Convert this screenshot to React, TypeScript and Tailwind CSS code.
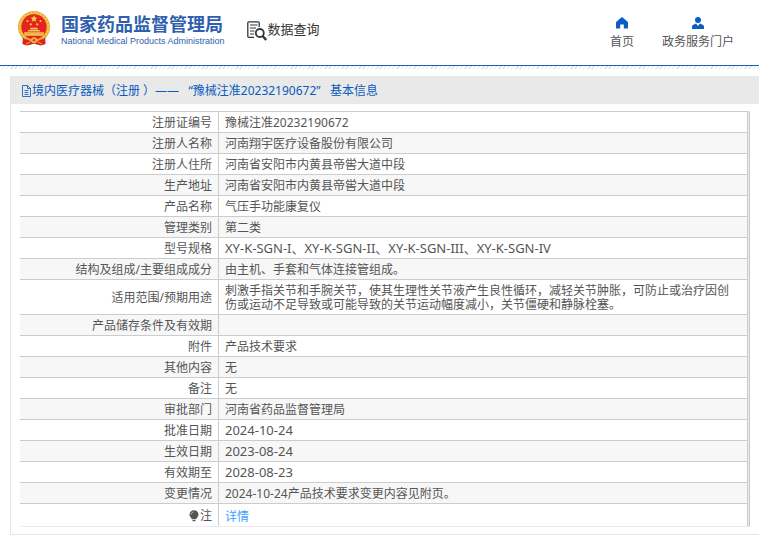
interface DetailRow {
  label: string;
  value: string;
  latin?: boolean;
}

const rows: DetailRow[] = [
  { label: '注册证编号', value: '豫械注准20232190672' },
  { label: '注册人名称', value: '河南翔宇医疗设备股份有限公司' },
  { label: '注册人住所', value: '河南省安阳市内黄县帝喾大道中段' },
  { label: '生产地址', value: '河南省安阳市内黄县帝喾大道中段' },
  { label: '产品名称', value: '气压手功能康复仪' },
  { label: '管理类别', value: '第二类' },
  { label: '型号规格', value: 'XY-K-SGN-I、XY-K-SGN-II、XY-K-SGN-III、XY-K-SGN-IV', latin: true },
  { label: '结构及组成/主要组成成分', value: '由主机、手套和气体连接管组成。' },
  {
    label: '适用范围/预期用途',
    value:
      '刺激手指关节和手腕关节，使其生理性关节液产生良性循环，减轻关节肿胀，可防止或治疗因创伤或运动不足导致或可能导致的关节运动幅度减小，关节僵硬和静脉栓塞。',
  },
  { label: '产品储存条件及有效期', value: '' },
  { label: '附件', value: '产品技术要求' },
  { label: '其他内容', value: '无' },
  { label: '备注', value: '无' },
  { label: '审批部门', value: '河南省药品监督管理局' },
  { label: '批准日期', value: '2024-10-24', latin: true },
  { label: '生效日期', value: '2023-08-24', latin: true },
  { label: '有效期至', value: '2028-08-23', latin: true },
  { label: '变更情况', value: '2024-10-24产品技术要求变更内容见附页。' },
];

function Emblem() {
  return (
    <svg className="h-[35px] w-8 shrink-0" viewBox="0 0 32 35" aria-hidden="true">
      <path d="M5 26h22l.6 7-4.600 1.400-7-1.600-7 1.600L4.400 33z" fill="#d8201c" />
      <circle cx="16" cy="16" r="16" fill="#e9ae35" />
      <circle cx="16" cy="16" r="14.200" fill="none" stroke="#f8d766" strokeWidth="1.200" strokeDasharray="2 1.300" />
      <circle cx="16" cy="15.800" r="12.600" fill="#e5231f" />
      <path d="M16 4.300l1 2.200 2.400.2-1.800 1.600.6 2.400-2.200-1.300-2.200 1.300.6-2.400-1.800-1.600 2.400-.2z" fill="#fbd64c" />
      <g fill="#f7c740">
        <circle cx="9.500" cy="10" r="1.100" />
        <circle cx="22.500" cy="10" r="1.100" />
        <circle cx="12.800" cy="13.400" r="1.100" />
        <circle cx="19.200" cy="13.400" r="1.100" />
      </g>
      <path d="M12 17.500l1.200-.8h5.600l1.200.8v1h-8zM10.500 19h11l1 1.500h-13zM6 21.200h20l-.6 3.600H6.600z" fill="#f6cb55" />
      <path d="M6.500 22.800h19" stroke="#e59a34" strokeWidth=".7" />
      <path d="M4.500 26.500c4 1 7 2 8.500 3.500h6c1.500-1.500 4.500-2.500 8.500-3.500l-1 3-5.500 2.500h-10L5.500 29.500z" fill="#dc2420" />
      <path d="M6 27.500c3.500.2 5.500 1.500 7 3M26 27.500c-3.500.2-5.500 1.500-7 3M8 33l4-2M24 33l-4-2" fill="none" stroke="#f1b53f" strokeWidth="1" />
      <circle cx="16" cy="29.300" r="3" fill="#f2bd42" />
      <circle cx="16" cy="29.300" r="1.300" fill="#df3a22" />
    </svg>
  );
}

function SearchDocIcon() {
  return (
    <svg className="h-5 w-5 shrink-0" viewBox="0 0 20 20" fill="none" stroke="#34343f" aria-hidden="true">
      <path d="M7 16.300H1.800a1 1 0 0 1-1-1V1.800a1 1 0 0 1 1-1h9.400a1 1 0 0 1 1 1V6" strokeWidth="1.300" />
      <path d="M3 4h7.500M3 7h6M3 10h4.500M3 13h4" strokeWidth="1.200" />
      <circle cx="12.800" cy="12" r="4" strokeWidth="1.800" />
      <path d="M15.600 15l3.600 4" strokeWidth="2.400" />
    </svg>
  );
}

function HomeIcon() {
  return (
    <svg className="h-3 w-3" viewBox="0 0 12 12" fill="#0a5dc2" aria-hidden="true">
      <path d="M6 0l5.400 4.500q.6.500.6 1.200V11.500H7.800V7.600H4.200v3.900H0V5.700q0-.7.6-1.200z" />
    </svg>
  );
}

function UserIcon() {
  return (
    <svg className="h-3 w-3" viewBox="0 0 12 12" fill="#0a5dc2" aria-hidden="true">
      <circle cx="6" cy="3" r="3" />
      <path d="M0 12V9.500q0-1 .9-1.500L4 6.600 6 9l2-2.400L11.100 8q.9.500.9 1.500V12z" />
    </svg>
  );
}

function FileIcon() {
  return (
    <svg className="h-3 w-[11px] shrink-0" viewBox="0 0 11 12" fill="none" stroke="#1a62c0" aria-hidden="true">
      <path d="M1.500 .5h5l3 3v8h-8zM6.500 .5v3h3M3.500 5.500h4M3.500 7.500h4M3.500 9.500h4" strokeWidth=".9" />
    </svg>
  );
}

function BulbIcon() {
  return (
    <svg className="h-3 w-[10px]" viewBox="0 0 10 12" aria-hidden="true">
      <path d="M5 .3a4.500 4.300 0 0 1 4.500 4.300c0 2.200-1.700 3.200-2.500 4.700H3C2.200 7.800.5 6.800.5 4.600A4.500 4.300 0 0 1 5 .3z" fill="#555" />
      <path d="M3.500 10.600h3" stroke="#555" strokeWidth="1.200" />
      <path d="M2.200 4.500c.1-1.400 1-2.300 2.300-2.500" fill="none" stroke="#ddd" strokeWidth=".8" />
    </svg>
  );
}

function Header() {
  return (
    <header>
      <div className="flex h-[66px] items-start justify-between border-b border-[#1a5fb4] pr-[25px] pl-[18px]">
        <div className="flex items-start">
          <a href="#" className="flex gap-[11px] pt-[11px] text-[#2f5fae]">
            <Emblem />
            <span className="flex flex-col whitespace-nowrap">
              <span className="text-[18px] leading-[26px] font-bold">国家药品监督管理局</span>
              <span className="font-['Liberation_Sans',sans-serif] text-[9px] leading-2">
                National Medical Products Administration
              </span>
            </span>
          </a>
          <h1 className="ml-[22px] flex gap-px pt-[21px] text-[13px] leading-4 whitespace-nowrap text-[#333]">
            <SearchDocIcon />
            数据查询
          </h1>
        </div>
        <nav className="flex gap-7 pt-[17px] whitespace-nowrap">
          <a href="#" className="flex flex-col items-center gap-[5px]">
            <HomeIcon />
            <span className="leading-4">首页</span>
          </a>
          <a href="#" className="flex flex-col items-center gap-[5px]">
            <UserIcon />
            <span className="leading-4">政务服务门户</span>
          </a>
        </nav>
      </div>
      <div className="h-[3px] bg-[repeating-linear-gradient(135deg,#e2e2e2_0px,#e2e2e2_1px,#ffffff_1px,#ffffff_3px)]" />
    </header>
  );
}

export default function App() {
  return (
    <div className="bg-white font-['Noto_Sans','Noto_Sans_CJK_SC',sans-serif] text-[12px] text-[#555]" lang="zh-CN">
      <Header />
      <main className="mt-[7px] ml-[10px] border-b border-l border-[#e6e6e6]">
        <h2 className="flex h-7 items-center bg-[#e9e9e9] pt-[2px] pl-[10px] text-[#0a5bbd]">
          <FileIcon />
          <span>境内医疗器械（注册 ）——&nbsp; &nbsp;“豫械注准20232190672”&nbsp; &nbsp;基本信息</span>
        </h2>

        <div className="mt-[7px] mr-[9px] mb-[7px] ml-[9px] border-r border-b border-r-[#cac7d3] border-b-[#ebeaf4] bg-[#ebeaf2] pr-px">
          <table className="w-full border-separate border-spacing-0 bg-white leading-[14px]">
            <tbody>
              {rows.map((row) => (
                <tr key={row.label} className="even:bg-[#f7f7f7]">
                  <th scope="row" className="h-[21px] w-[199px] border-t border-r border-[#ccc] px-[6px] pt-1 pb-[2px] text-right font-normal">
                    {row.label}
                  </th>
                  <td className={`border-t border-r border-[#ccc] pr-3 pl-[6px] ${row.latin ? 'py-[3px] text-[13px]' : 'pt-1 pb-[2px]'}`}>
                    {row.value}
                  </td>
                </tr>
              ))}
              <tr>
                <th scope="row" className="h-[23px] border-t border-r border-[#ccc] px-[6px] pt-[5px] pb-[3px] font-normal">
                  <span className="flex items-center justify-end gap-px">
                    <BulbIcon />
                    注
                  </span>
                </th>
                <td className="border-t border-r border-[#ccc] pt-[6px] pr-3 pb-[2px] pl-[6px]">
                  <a href="#" className="text-[#409eff]">详情</a>
                </td>
              </tr>
            </tbody>
          </table>
        </div>
      </main>
    </div>
  );
}
